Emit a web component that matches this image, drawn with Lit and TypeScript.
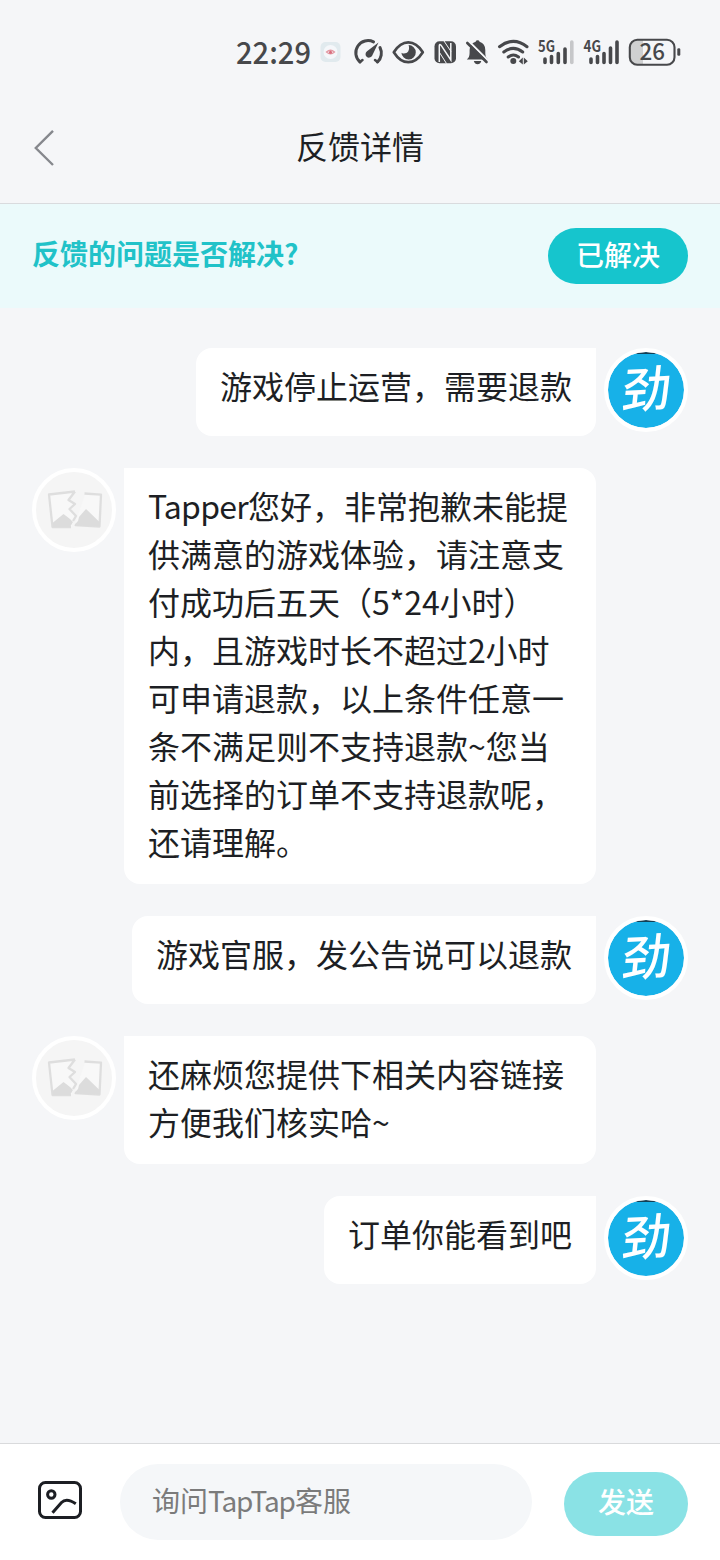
import { LitElement, html, css } from "lit";
import { customElement, property } from "lit/decorators.js";

interface Message {
  mine: boolean;
  lines: string[];
}

const messages: Message[] = [
  { mine: true, lines: ["游戏停止运营，需要退款"] },
  {
    mine: false,
    lines: [
      "Tapper您好，非常抱歉未能提",
      "供满意的游戏体验，请注意支",
      "付成功后五天（5*24小时）",
      "内，且游戏时长不超过2小时",
      "可申请退款，以上条件任意一",
      "条不满足则不支持退款~您当",
      "前选择的订单不支持退款呢，",
      "还请理解。",
    ],
  },
  { mine: true, lines: ["游戏官服，发公告说可以退款"] },
  { mine: false, lines: ["还麻烦您提供下相关内容链接", "方便我们核实哈~"] },
  { mine: true, lines: ["订单你能看到吧"] },
];

@customElement("status-bar")
class StatusBar extends LitElement {
  static styles = css`
    :host { display: flex; height: 100px; padding: 0 34px 0 236px; align-items: flex-start; }
    .icons { display: block; width: 450px; height: 100px; flex: none; }
    .ink { fill: #47484b; }
    .line { fill: none; stroke: #47484b; stroke-linecap: round; stroke-linejoin: round; }
    .clock { font: 500 31px "Noto Sans CJK SC", sans-serif; fill: #47484b; }
    .net { font: 700 15.5px "Noto Sans CJK SC", sans-serif; fill: #47484b; }
    .level { font: 500 23px "Noto Sans CJK SC", sans-serif; fill: #47484b; }
  `;
  render() {
    return html`
      <svg class="icons" viewBox="236 0 450 100">
        <text class="clock" x="236" y="63.7" textLength="75" lengthAdjust="spacingAndGlyphs">22:29</text>
        <rect x="320.500" y="42" width="20" height="20" rx="5" fill="#e1eaee" />
        <circle cx="330.500" cy="52" r="7" fill="#f5f7fa" />
        <path d="M326.500 52q4-3.600 8 0q-4 3.600-8 0z" fill="none" stroke="#e39aa4" stroke-width="1.300" />
        <circle cx="330.500" cy="52.200" r="1.500" fill="#d96d7d" />

        <g class="line" stroke-width="3">
          <path d="M360 62A12.200 12.200 0 0 1 373.500 41.900" />
          <path d="M380 47.500A12.200 12.200 0 0 1 377.500 62" />
          <path d="M360 62l2.500-2M377.500 62l-2.500-2" stroke-width="2.500" />
        </g>
        <path class="ink" d="M378.500 42.500l-6.500 13.500a3.500 3.500 0 1 1-5-4.700z" />

        <path class="line" stroke-width="2.700" d="M393.800 52.200Q400 42.300 408.300 42.300T422.800 52.200Q416.500 62.200 408.300 62.200T393.800 52.200z" />
        <path class="ink" d="M408.600 45.100a7.200 7.200 0 1 1-7.200 7.600c1 1.200 5.500 1.200 6.900-1.400c1.200-2.200.8-4.200.3-6.200z" />

        <rect class="ink" x="434.500" y="41.300" width="21.500" height="22" rx="5" />
        <path d="M439.300 62V45.500q.2-2 1.700-.3L450.800 60V43" fill="none" stroke="#f5f6f8" stroke-width="1.500" />
        <path d="M444 41l7 10.500M439.500 52.500l7 11" stroke="#f5f6f8" stroke-width="1" />

        <path class="ink" d="M466.800 59.500q2.800-2 2.800-6.500V50q0-6.500 6-8.300a2.100 2.100 0 0 1 4 0q5.700 1.800 5.700 8.300v3q0 4.500 2.700 6.500zM473.800 61h7.500q-1 3.200-3.700 3.200t-3.800-3.200z" />
        <path d="M468 40.500l21 21" stroke="#f5f6f8" stroke-width="2.200" />
        <path class="line" d="M467.300 43L486.500 62" stroke-width="2.600" />

        <g class="line" stroke-width="3" stroke-linecap="butt">
          <path d="M499.500 46.700Q513.500 36 527 46.700" />
          <path d="M503.800 52Q513.300 44.700 522.700 52" />
          <path d="M508.200 57Q513.300 53 518.500 57" />
        </g>
        <circle class="ink" cx="513.300" cy="61" r="3" />
        <path class="ink" d="M518.800 61.200l4-3.800v7.200zM527.800 61.200l-4-3.800v7.200z" />

        <text class="net" x="538" y="52" textLength="17" lengthAdjust="spacingAndGlyphs">5G</text>
        <text class="net" x="583.500" y="52" textLength="17.500" lengthAdjust="spacingAndGlyphs">4G</text>
        <g class="line" stroke-width="3.600">
          <path d="M545 59v3.500M551.500 56.500v6M558.300 53.500v9M565 49v13.500" />
          <path d="M591 59v3.500M597.500 56.500v6M604 53.500v9M610.500 48v14.500M617 42v20.500" />
        </g>
        <path d="M571.800 42v20.500" stroke="#c6c7c9" stroke-width="3.600" stroke-linecap="round" />

        <path d="M637 40h6v24h-6q-7 0-7-7v-10q0-7 7-7z" fill="#cfd0d1" />
        <rect class="line" x="629.800" y="39.700" width="44.700" height="25" rx="7.500" stroke-width="2.100" />
        <rect class="ink" x="677.300" y="48.200" width="3" height="7.600" rx="1.300" />
        <text class="level" x="639.500" y="60.3" textLength="25.500" lengthAdjust="spacingAndGlyphs">26</text>
      </svg>
    `;
  }
}

@customElement("chat-message")
class ChatMessage extends LitElement {
  @property({ attribute: false }) message!: Message;

  static styles = css`
    :host { display: block; }
    .row { display: flex; gap: 8px; align-items: flex-start; }
    .mine { flex-direction: row-reverse; }
    .bubble {
      box-sizing: border-box; max-width: 472px; min-height: 88px; padding: 13px 24px 19px;
      background: #fff; border-radius: 0 16px 16px 16px; color: #1d1f24;
      font-size: 32px; line-height: 48px;
    }
    .theirs .bubble { width: 472px; }
    .mine .bubble { border-radius: 16px 0 16px 16px; }
    .text { white-space: nowrap; }
    .word { letter-spacing: -0.75px; }
    .digits { letter-spacing: -0.2px; }
    .avatar {
      box-sizing: border-box; width: 84px; height: 84px; flex: none; border-radius: 50%;
      border: 4px solid #fff; background: #f5f5f5;
    }
    .mine .avatar { background: linear-gradient(#123f55 0 1.500px, #17b1e8 2.500px) padding-box; }
    .pic { display: block; width: 76px; height: 76px; overflow: visible; }
    .glyph { font: 500 49px "Noto Sans CJK SC", sans-serif; fill: #fff; }
  `;

  private rich(line: string) {
    return line
      .split(/([A-Za-z]+|[0-9*]+)/)
      .map((part) =>
        /^[A-Za-z]/.test(part)
          ? html`<span class="word">${part}</span>`
          : /^[0-9]/.test(part)
            ? html`<span class="digits">${part}</span>`
            : part
      );
  }

  render() {
    const { mine, lines } = this.message;
    return html`
      <div class="row ${mine ? "mine" : "theirs"}">
        <div class="avatar">
          ${mine
            ? html`<svg class="pic" viewBox="0 0 76 76">
                <text class="glyph" x="0" y="0" transform="translate(12.500 56.500) skewY(-3) skewX(-6)">劲</text>
              </svg>`
            : html`<svg class="pic" viewBox="36 472 76 76">
                <path d="M75 491.500L49 494.500L52.500 527H71l5-11l-6.500-7l5.500-5l-6.500-4zM85.500 493.500l15.500 1.200l-1.500 32l-25-1.700z" fill="#f8f8f8" />
                <path d="M84.500 493.500L101 494.700L99.500 526.500L75 525M75 491.500L49 494.500L52.500 527H71M75 491.500l-6.500 8.500l6.500 4l-5.500 5l6.500 7l-3 5" fill="none" stroke="#dedede" stroke-width="2.300" stroke-linejoin="round" />
                <path d="M52.500 527v-4L63.500 514l6.500 5l3 3l-3 5zM74 525.500l4-4.500l1-4l7-8l14 13.500v4z" fill="#dcdcdc" />
              </svg>`}
        </div>
        <div class="bubble">${lines.map((l) => html`<div class="text">${this.rich(l)}</div>`)}</div>
      </div>
    `;
  }
}

@customElement("app-root")
class AppRoot extends LitElement {
  static styles = css`
    :host {
      display: flex; flex-direction: column; box-sizing: border-box; width: 720px; height: 1560px;
      background: #f5f6f8; color: #1d1f24; overflow: hidden;
      font-family: "Noto Sans CJK SC", sans-serif;
    }
    .header {
      display: grid; grid-template-columns: 88px 1fr 88px; align-items: center; box-sizing: border-box;
      height: 104px; padding-bottom: 8px; border-bottom: 1px solid #d9dbde; flex: none;
    }
    .back { display: block; width: 24px; height: 40px; margin-left: 32px; }
    .title { text-align: center; font-size: 32px; line-height: 48px; padding-bottom: 5px; }
    .banner {
      display: flex; justify-content: space-between; align-items: center; box-sizing: border-box;
      height: 104px; padding: 0 32px; background: #ebfafb; flex: none;
    }
    .question { color: #21c2c8; font-size: 28px; font-weight: 700; line-height: 42px; padding-bottom: 6px; }
    .pill {
      box-sizing: border-box; border-radius: 40px; color: #fff; background: #16c5cd; text-align: center;
      font-size: 28px; font-weight: 500;
    }
    .solved { width: 140px; height: 56px; line-height: 52px; }
    .send { width: 124px; height: 64px; line-height: 59px; background: #8ae2e5; margin-left: 32px; }
    .chat { display: flex; flex-direction: column; gap: 32px; padding: 40px 32px 0; flex: 1; }
    .composer {
      display: flex; align-items: flex-start; box-sizing: border-box; height: 117px; padding: 20px 32px 0 36px;
      background: #fff; border-top: 1px solid #d9dadc; flex: none;
    }
    .image { display: block; width: 48px; height: 48px; margin: 12px 36px 0 0; }
    .input {
      box-sizing: border-box; width: 412px; height: 76px; border-radius: 38px; background: #f5f7f9;
      padding: 0 32px; color: #7b7b7b; font-size: 28px; line-height: 72px;
    }
    .composer .send { margin-top: 8px; }
    .latin { letter-spacing: -1.1px; }
  `;

  render() {
    return html`
      <status-bar></status-bar>
      <div class="header">
        <svg class="back" viewBox="32 128 24 40">
          <path d="M53 130.800L35.800 148L53 165" fill="none" stroke="#86888d" stroke-width="2.400" />
        </svg>
        <div class="title">反馈详情</div>
      </div>
      <div class="banner">
        <div class="question">反馈的问题是否解决?</div>
        <div class="pill solved">已解决</div>
      </div>
      <div class="chat">${messages.map((m) => html`<chat-message .message=${m}></chat-message>`)}</div>
      <div class="composer">
        <svg class="image" viewBox="36 1476 48 48" fill="none" stroke="#1c1e23" stroke-width="3">
          <rect x="39.500" y="1482.500" width="41" height="35" rx="6" />
          <circle cx="51.300" cy="1494.500" r="3.700" />
          <path d="M52.500 1512.800L61.500 1502.500Q66.500 1497.500 75.800 1503.800" />
        </svg>
        <div class="input">询问<span class="latin">TapTap</span>客服</div>
        <div class="pill send">发送</div>
      </div>
    `;
  }
}
